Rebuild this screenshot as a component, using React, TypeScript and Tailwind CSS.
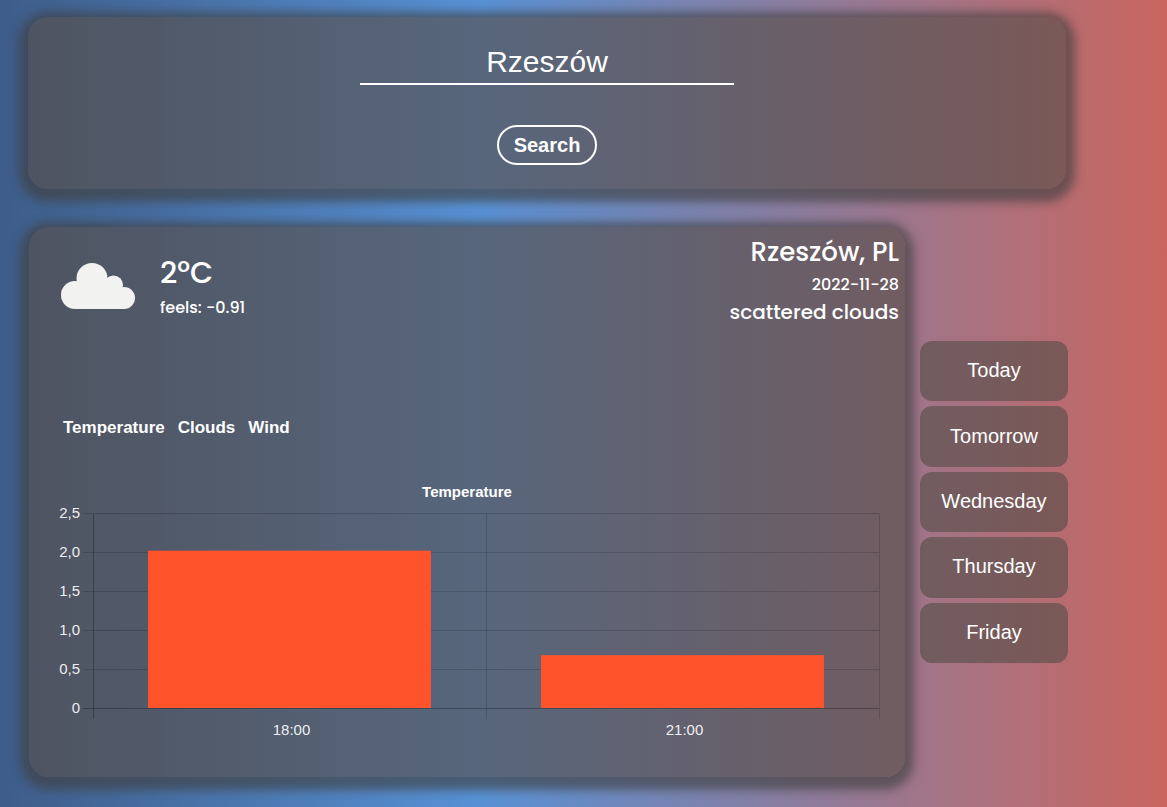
import { useState } from "react";

const days = ["Today", "Tomorrow", "Wednesday", "Thursday", "Friday"];
const metrics = ["Temperature", "Clouds", "Wind"];

const readings = [
  { time: "18:00", value: 2.03 },
  { time: "21:00", value: 0.69 },
];

const axis = { left: 37, right: 823, top: 34, bottom: 229, max: 2.5 };
const ticks = ["0", "0,5", "1,0", "1,5", "2,0", "2,5"];

const panel =
  "rounded-[20px] bg-[#574f4aa3] shadow-[0_4px_10px_9px_#404040a3]";

function Cloud() {
  return (
    <svg viewBox="0 0 74 46" className="w-[74px] shrink-0" fill="#f2f2f0" role="img" aria-label="Clouds">
      <circle cx="31" cy="15.5" r="15.5" />
      <circle cx="14" cy="32" r="14" />
      <circle cx="52.5" cy="22" r="9.5" />
      <circle cx="63" cy="35" r="11" />
      <path d="M14 46V30L20 18H46L61 25L63 46Z" />
    </svg>
  );
}

function BarChart({ title }: { title: string }) {
  const step = (axis.bottom - axis.top) / (ticks.length - 1);
  const slot = (axis.right - axis.left) / readings.length;
  const barWidth = slot * 0.72;

  return (
    <svg viewBox="0 0 826 270" className="block w-full text-[15px]" fill="#fff" role="img" aria-label={title}>
      <text x="411" y="17" textAnchor="middle" className="font-bold">
        {title}
      </text>
      {ticks.map((label, i) => {
        const y = axis.bottom - i * step;
        return (
          <g key={label}>
            <path d={`M27 ${y - 0.5}H${axis.right}`} stroke="#000" strokeOpacity={i ? 0.15 : 0.28} />
            <text x="24" y={y + 4} textAnchor="end" fillOpacity="0.92">
              {label}
            </text>
          </g>
        );
      })}
      {[0, 1, 2].map((i) => (
        <path
          key={i}
          d={`M${axis.left + i * slot + 0.5} ${axis.top}V${axis.bottom + 10}`}
          stroke="#000"
          strokeOpacity={i ? 0.15 : 0.28}
        />
      ))}
      {readings.map(({ time, value }, i) => {
        const center = axis.left + slot * (i + 0.5);
        const height = ((axis.bottom - axis.top) * value) / axis.max;
        return (
          <g key={time}>
            <rect x={center - barWidth / 2} y={axis.bottom - height} width={barWidth} height={height - 1} fill="#ff532b" />
            <text x={center + 2} y="255" textAnchor="middle" fillOpacity="0.92">
              {time}
            </text>
          </g>
        );
      })}
    </svg>
  );
}

export default function App() {
  const [city, setCity] = useState("Rzeszów");
  const [metric, setMetric] = useState("Temperature");

  return (
    <div className="min-h-screen bg-[linear-gradient(90deg,#3e5c88_0%,#5791d5_41%,#c9655e_100%)] pt-[17px] pr-[99px] pb-[30px] pl-7 font-['Liberation_Sans',Arial,sans-serif] text-white">
      <form
        className={`${panel} mr-0.5 flex flex-col items-center pt-6 pb-6`}
        onSubmit={(event) => event.preventDefault()}
      >
        <input
          aria-label="City"
          value={city}
          onChange={(event) => setCity(event.target.value)}
          className="h-11 w-[36%] border-b-2 border-white bg-transparent pb-0.5 text-center text-[30px] outline-none"
        />
        <button className="mt-10 h-10 w-[100px] rounded-full border-2 border-white text-xl font-bold">
          Search
        </button>
      </form>

      <main className="mt-[38px] ml-px flex items-center gap-[15px]">
        <section className={`${panel} min-w-0 flex-1 pb-[27px]`}>
          <header className="flex justify-between pr-1.5 pl-8 font-['Poppins',Inter,sans-serif] font-medium">
            <div className="flex items-center gap-[25px] pt-5">
              <Cloud />
              <div className="pt-1">
                <p className="text-3xl leading-10">2°C</p>
                <p className="text-base leading-[30px]">feels: -0.91</p>
              </div>
            </div>
            <div className="pt-[7px] text-right">
              <p className="text-[26px] leading-9">Rzeszów, PL</p>
              <p className="text-base leading-[30px]">2022-11-28</p>
              <p className="text-xl leading-6">scattered clouds</p>
            </div>
          </header>
          <nav className="mt-[92px] flex gap-[13px] pl-[34px] text-[17px] leading-6 font-bold">
            {metrics.map((name) => (
              <button key={name} onClick={() => setMetric(name)}>
                {name}
              </button>
            ))}
          </nav>
          <div className="mt-10 pr-[23px] pl-[27px]">
            <BarChart title={metric} />
          </div>
        </section>

        <nav className="flex h-[322px] w-[148px] flex-col gap-[5px]">
          {days.map((day) => (
            <button key={day} className="flex-1 rounded-xl bg-[#574f4aa3] pb-0.5 text-xl">
              {day}
            </button>
          ))}
        </nav>
      </main>
    </div>
  );
}
